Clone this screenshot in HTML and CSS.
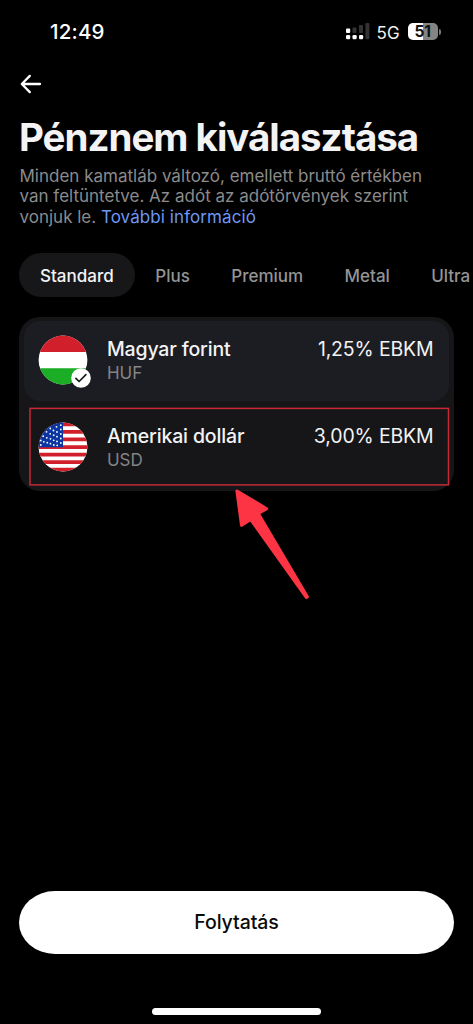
FILE: index.html
```html
<!DOCTYPE html>
<html lang="hu">
<head>
<meta charset="utf-8">
<title>Pénznem kiválasztása</title>
<link rel="stylesheet" href="styles.css">
</head>
<body>
<div class="screen">
  <header class="status">
    <span class="time">12:49</span>
    <div class="status-right">
      <svg class="signal" width="24" height="17" viewBox="0 0 24 17">
        <g fill="#fff"><rect x="0" y="5.5" width="4.2" height="4.5" rx="1"/><rect x="0" y="12" width="4.2" height="4.3" rx="1.2"/><rect x="6.5" y="12" width="4.2" height="4.3" rx="1.2"/><rect x="13" y="12" width="4.2" height="4.3" rx="1.2"/></g>
        <g fill="#333"><rect x="6.5" y="4.5" width="4" height="5.5" rx="1"/><rect x="13" y="2" width="4" height="8" rx="1"/><rect x="19.4" y="0" width="4" height="16.3" rx="1.2"/></g>
      </svg>
      <span class="network">5G</span>
      <div class="battery"><span class="level">51</span></div>
      <span class="battery-tip"></span>
    </div>
  </header>
  <nav class="back">
    <svg width="22" height="20" viewBox="0 0 22 20" fill="none" stroke="#fff" stroke-width="2.3" stroke-linecap="round" stroke-linejoin="round"><path d="M20 10H2M9.8 1.9L1.8 10l8 8.1"/></svg>
  </nav>
  <h1 class="title">Pénznem kiválasztása</h1>
  <p class="desc">Minden kamatláb változó, emellett bruttó értékben<br>van feltüntetve. Az adót az adótörvények szerint<br>vonjuk le. <a class="link">További információ</a></p>
  <div class="tabs">
    <span class="tab active">Standard</span><span class="tab">Plus</span><span class="tab">Premium</span><span class="tab">Metal</span><span class="tab">Ultra</span>
  </div>
  <main class="card">
    <div class="row selected">
      <div class="flag">
        <svg width="50" height="50" viewBox="0 0 50 50"><clipPath id="hu"><circle cx="25" cy="25" r="24.4"/></clipPath><g clip-path="url(#hu)"><path fill="#fff" d="M0 0h50v50H0z"/><path fill="#d1202c" d="M0 0h50v17H0z"/><path fill="#1aad25" d="M0 33.2h50V50H0z"/></g></svg>
        <svg class="check" width="20" height="20" viewBox="0 0 20 20"><circle cx="10" cy="10" r="9.8" fill="#fff"/><path d="M4.9 10.3l3.2 3.2 6.8-6.8" fill="none" stroke="#191c1f" stroke-width="1.7" stroke-linecap="round" stroke-linejoin="round"/></svg>
      </div>
      <div class="info"><div class="name">Magyar forint</div><div class="code">HUF</div></div>
      <div class="rate">1,25% EBKM</div>
    </div>
    <div class="row highlighted">
      <div class="flag">
        <svg width="50" height="50" viewBox="0 0 50 50"><clipPath id="us"><circle cx="25" cy="25" r="24.4"/></clipPath><g clip-path="url(#us)"><path fill="#fff" d="M0 0h50v50H0z"/><path stroke="#d1202c" stroke-width="3.77" d="M0 2.4h50M0 9.94h50M0 17.48h50M0 25.02h50M0 32.56h50M0 40.1h50M0 47.64h50"/><path fill="#0b35a0" d="M0 0h25v25.3H0z"/>
        <g fill="#fff"><circle cx="18.5" cy="4.8" r=".9"/><circle cx="22.8" cy="3.2" r=".9"/><circle cx="12.3" cy="6.5" r=".9"/><circle cx="15.5" cy="8.5" r=".9"/><circle cx="19" cy="10" r=".9"/><circle cx="22.8" cy="7.5" r=".9"/><circle cx="8.5" cy="9.8" r=".9"/><circle cx="12.2" cy="11.8" r=".9"/><circle cx="15.7" cy="13.2" r=".9"/><circle cx="22.8" cy="12" r=".9"/><circle cx="5.2" cy="14.2" r=".9"/><circle cx="8.8" cy="15.8" r=".9"/><circle cx="12.5" cy="16.8" r=".9"/><circle cx="19" cy="14.7" r=".9"/><circle cx="22.8" cy="16.5" r=".9"/><circle cx="2.8" cy="18.5" r=".9"/><circle cx="5.8" cy="19.8" r=".9"/><circle cx="9.3" cy="20.7" r=".9"/><circle cx="15.7" cy="18.3" r=".9"/><circle cx="19" cy="19.4" r=".9"/><circle cx="22.8" cy="21" r=".9"/><circle cx="2.8" cy="23" r=".9"/><circle cx="12.5" cy="21.7" r=".9"/><circle cx="15.8" cy="23" r=".9"/><circle cx="19.2" cy="23.3" r=".9"/></g></g></svg>
      </div>
      <div class="info"><div class="name">Amerikai dollár</div><div class="code">USD</div></div>
      <div class="rate">3,00% EBKM</div>
      <svg class="outline" width="421" height="79" viewBox="0 0 421 79"><rect x="1" y="1.4" width="418.5" height="76.5" fill="none" stroke="#c52a37" stroke-width="1.5"/></svg>
      <svg class="pointer" width="80" height="116" viewBox="0 0 80 116"><path d="M3 3L32.6 20.8 24.1 25.3 73.3 108.8 72.5 109.5 16.8 31.5 7.6 37.2z" fill="#fd3444" stroke="#fd3444" stroke-width="3.2" stroke-linejoin="round"/></svg>
    </div>
  </main>
  <footer class="footer">
    <button class="continue">Folytatás</button>
    <div class="home"></div>
  </footer>
</div>
</body>
</html>
```

FILE: styles.css
```css
* { box-sizing: border-box; }
body { margin: 0; background: #000; }
.screen {
  width: 473px; height: 1024px; overflow: hidden;
  display: flex; flex-direction: column;
  background: #000; color: #f3f3f4;
  font-family: Inter, "Liberation Sans", sans-serif;
}
.status { height: 63px; flex: none; display: flex; align-items: center; justify-content: space-between; padding: 0 32px 0 50px; }
.time { font-size: 20.5px; font-weight: 500; color: #fff; letter-spacing: .2px; }
.status-right { display: flex; align-items: center; }
.signal { margin-right: 7px; }
.network { font-size: 17px; line-height: 20px; color: #f0f0f0; width: 31px; margin-top: 2px; letter-spacing: .2px; }
.battery { width: 30.5px; height: 17px; border-radius: 5px; background: linear-gradient(90deg, #fff 51%, #848484 51%); text-align: center; }
.level { display: block; font-size: 15.5px; line-height: 17px; font-weight: 700; color: #111; }
.battery-tip { width: 2px; height: 6px; margin-left: 1px; border-radius: 0 2px 2px 0; background: #777; }
.back { height: 42px; flex: none; padding: 10.5px 0 0 20px; }
.back svg { display: block; }
.title { margin: 8px 0 0 19px; font-size: 38.5px; line-height: 48px; font-weight: 700; letter-spacing: -1.02px; white-space: nowrap; }
.desc { margin: 4.8px 0 0 19.5px; font-size: 17px; line-height: 20.6px; color: #8b8b8c; white-space: nowrap; }
.link { color: #6d98f5; letter-spacing: .08px; }
.tabs { margin: 25.9px 0 0 19px; display: flex; flex: none; height: 43.5px; overflow: hidden; }
.tab { padding: 1px 20.7px 0; border-radius: 22px; font-size: 17px; line-height: 44px; font-weight: 500; color: #949495; white-space: nowrap; }
.active { background: #171719; color: #f3f3f4; padding: 1px 21px 0; }
.card { margin: 20px 19.5px 0 19.4px; height: 174px; flex: none; padding: 4.5px; border-radius: 21px; background: #161618; display: flex; flex-direction: column; gap: 7.5px; }
.row { position: relative; height: 80px; flex: none; display: flex; padding: 14px 15.5px 0 14px; border-radius: 16px; }
.selected { background: #1c1d22; }
.highlighted { padding-top: 13.5px; }
.flag { position: relative; width: 50px; height: 50px; margin-right: 19px; }
.flag svg { display: block; }
.flag .check { position: absolute; left: 33px; top: 33px; }
.info { flex: 1; padding-top: .5px; }
.name { font-size: 19.5px; line-height: 26px; font-weight: 500; letter-spacing: -.15px; white-space: nowrap; }
.code { font-size: 17px; line-height: 22px; color: #848486; }
.rate { padding-top: .5px; font-size: 19.5px; line-height: 26px; letter-spacing: -.15px; white-space: nowrap; }
.outline { position: absolute; left: 5px; top: -1.5px; }
.pointer { position: absolute; left: 210.2px; top: 79px; }
.footer { margin-top: auto; padding: 0 19px 9.5px; height: 133.5px; display: flex; flex-direction: column; align-items: center; justify-content: space-between; }
.continue { width: 435px; height: 63px; border: 0; padding: 0; border-radius: 36px / 31.5px; background: #fff; color: #0a0a0a; font: 500 19.5px/63px Inter, "Liberation Sans", sans-serif; letter-spacing: -.1px; }
.home { width: 169px; height: 6.5px; border-radius: 4px; background: #fff; }
```
